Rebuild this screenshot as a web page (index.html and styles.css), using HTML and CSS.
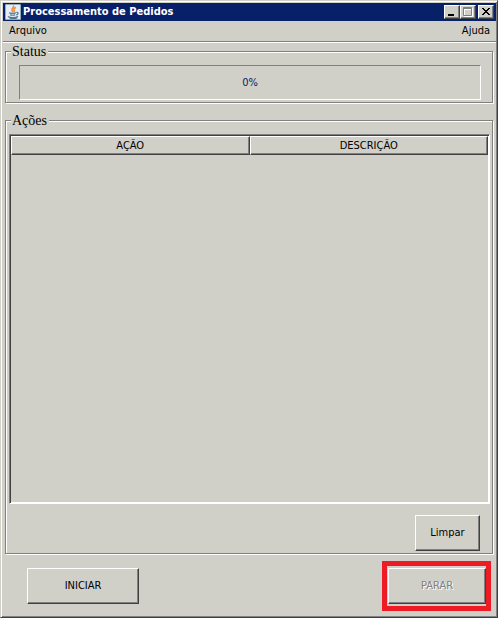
FILE: index.html
```html
<!DOCTYPE html>
<html lang="pt-BR">
<head>
<meta charset="utf-8">
<title>Processamento de Pedidos</title>
<link rel="stylesheet" href="styles.css">
</head>
<body>
<div class="window">
  <header class="titlebar">
    <svg class="app-icon" viewBox="0 0 16 16" aria-hidden="true">
      <rect width="16" height="16" rx="1" fill="#8fa9bd"/>
      <rect x="1" y="1" width="14" height="14" fill="#e9edf0"/>
      <path d="M8.500 1.500c1.200 2-2.800 2.800-1.500 5l1 1.500M10.800 3.500c-2 .8-2.500 1.700-1.500 3 .4.600 0 1-.5 1.500" fill="none" stroke="#ee8434" stroke-width="1.400"/>
      <path d="M4 8.800c1.500.8 5.500.7 7 0M5 10.700c1.500.6 3.800.6 5.200 0M3 12.500c2 1.500 8 1.500 10-.3M11.300 8.500c2.400-.5 2.400 1.800-.1 2.500M4.500 14.200c3 .5 6 .4 8-.5" fill="none" stroke="#4d7898" stroke-width="1.200"/>
    </svg>
    <h1 class="title">Processamento de Pedidos</h1>
    <div class="controls">
      <button class="control" type="button" aria-label="Minimizar"><svg viewBox="0 0 12 10"><path d="M2 7h6v2H2z" fill="#000"/></svg></button>
      <button class="control" type="button" aria-label="Maximizar" disabled><svg viewBox="0 0 12 10"><path d="M2.500 1.500h8v8h-8zM2.500 2.500h8" fill="none" stroke="#fff"/><path d="M1.500 .5h8v8h-8zM1.500 1.500h8" fill="none" stroke="#808080"/></svg></button>
      <button class="control close" type="button" aria-label="Fechar"><svg viewBox="0 0 12 10"><path d="M2 1h2v1h1v1h2V2h1V1h2v1H9v1H8v1H7v1h1v1h1v1h1v1H8V7H7V6H5v1H4v1H2V7h1V6h1V5h1V4H4V3H3V2H2z" fill="#000"/></svg></button>
    </div>
  </header>
  <nav class="menubar">
    <button class="menu" type="button">Arquivo</button>
    <button class="menu" type="button">Ajuda</button>
  </nav>
  <main class="content">
    <fieldset class="group status">
      <legend>Status</legend>
      <div class="progress" role="progressbar" aria-label="Status" aria-valuemin="0" aria-valuemax="100" aria-valuenow="0">0%</div>
    </fieldset>
    <fieldset class="group actions">
      <legend>Ações</legend>
      <div class="list">
        <table class="grid">
          <thead><tr><th scope="col">AÇÃO</th><th scope="col">DESCRIÇÃO</th></tr></thead>
          <tbody></tbody>
        </table>
      </div>
      <button class="button clear" type="button">Limpar</button>
    </fieldset>
  </main>
  <footer class="footer">
    <button class="button start" type="button">INICIAR</button>
    <div class="highlight"><button class="button stop" type="button" disabled>PARAR</button></div>
  </footer>
</div>
</body>
</html>
```
FILE: styles.css
```css
:root {
  --face: #d0d0c8;
  --shadow: #808080;
  --dark: #404040;
  --light: #ffffff;
  --navy: #082068;
}

* { box-sizing: border-box; }

body {
  margin: 0;
  background: var(--face);
  color: #000;
  font: 11px/14px "DejaVu Sans Condensed", "DejaVu Sans", sans-serif;
}

button { font: inherit; color: inherit; }

.window {
  display: flex;
  flex-direction: column;
  min-height: 100vh;
  padding: 2px 1px 1px 2px;
  border: 1px solid;
  border-color: var(--face) var(--dark) var(--dark) var(--face);
  box-shadow: inset 1px 1px var(--light), inset -1px -1px var(--shadow);
}

.titlebar {
  display: flex;
  align-items: center;
  height: 18px;
  padding: 0 2px;
  background: var(--navy);
  color: var(--light);
}

.app-icon { width: 16px; height: 16px; }

.title {
  flex: 1;
  margin: 0 0 0 2px;
  font-size: 11px;
  font-weight: bold;
}

.controls { display: flex; }

.control {
  display: block;
  width: 16px;
  height: 14px;
  padding: 0 1px;
  border: 1px solid;
  border-color: var(--light) var(--dark) var(--dark) var(--light);
  background: var(--face);
  box-shadow: inset -1px -1px var(--shadow);
}

.control svg { display: block; width: 12px; height: 10px; }
.control.close { margin-left: 2px; }

.menubar {
  display: flex;
  justify-content: space-between;
  height: 21px;
  padding: 0 6px;
  border-bottom: 1px solid var(--shadow);
  box-shadow: 0 1px var(--light);
}

.menu {
  padding: 0;
  border: 0;
  background: none;
}

.content {
  display: flex;
  flex: 1;
  flex-direction: column;
  gap: 9px;
  padding: 1px 3px 0 2px;
}

.group {
  min-width: 0;
  margin: 0;
  border: 1px solid var(--shadow);
  box-shadow: 1px 1px var(--light), inset 1px 1px var(--light);
}

.group legend {
  padding: 0 2px 0 1px;
  background: var(--face);
  font: 14px/17px "Liberation Serif", serif;
}

.status { padding: 5px 11px 2px 13px; }

.status legend { margin-left: -8px; }

.progress {
  height: 35px;
  border: 1px solid;
  border-color: var(--shadow) var(--light) var(--light) var(--shadow);
  color: var(--navy);
  line-height: 33px;
  text-align: center;
}

.actions {
  display: flex;
  flex: 1;
  flex-direction: column;
  padding: 5px 2px 2px 3px;
}

.actions legend { margin-left: 2px; }

/* Fills the window height left over by the bars, groups and buttons. */
.list {
  min-height: calc(100vh - 248px);
  border: 1px solid;
  border-color: var(--shadow) var(--light) var(--light) var(--shadow);
  padding: 1px;
  box-shadow: inset 1px 1px var(--dark), inset -1px -1px var(--light);
}

.grid {
  width: 100%;
  border-collapse: separate;
  border-spacing: 0;
  table-layout: fixed;
}

.grid th {
  height: 19px;
  padding: 0;
  border: 1px solid;
  border-color: var(--light) var(--dark) var(--dark) var(--light);
  box-shadow: inset -1px -1px var(--shadow);
  font-weight: normal;
}

.button {
  height: 36px;
  padding: 0;
  border: 1px solid;
  border-color: var(--light) var(--dark) var(--dark) var(--light);
  background: var(--face);
  box-shadow: inset -1px -1px var(--shadow);
}

.button:disabled {
  color: var(--shadow);
  text-shadow: 1px 1px var(--light);
}

.clear {
  align-self: flex-end;
  width: 65px;
  margin: 11px 10px 0 0;
}

.start { width: 112px; }
.stop { width: 98px; }

.footer {
  display: flex;
  align-items: center;
  justify-content: space-between;
  padding: 7px 5px 5px 24px;
}

.highlight {
  padding: 2px 0 2px 1px;
  border: 5px solid #ed1c24;
}
```
